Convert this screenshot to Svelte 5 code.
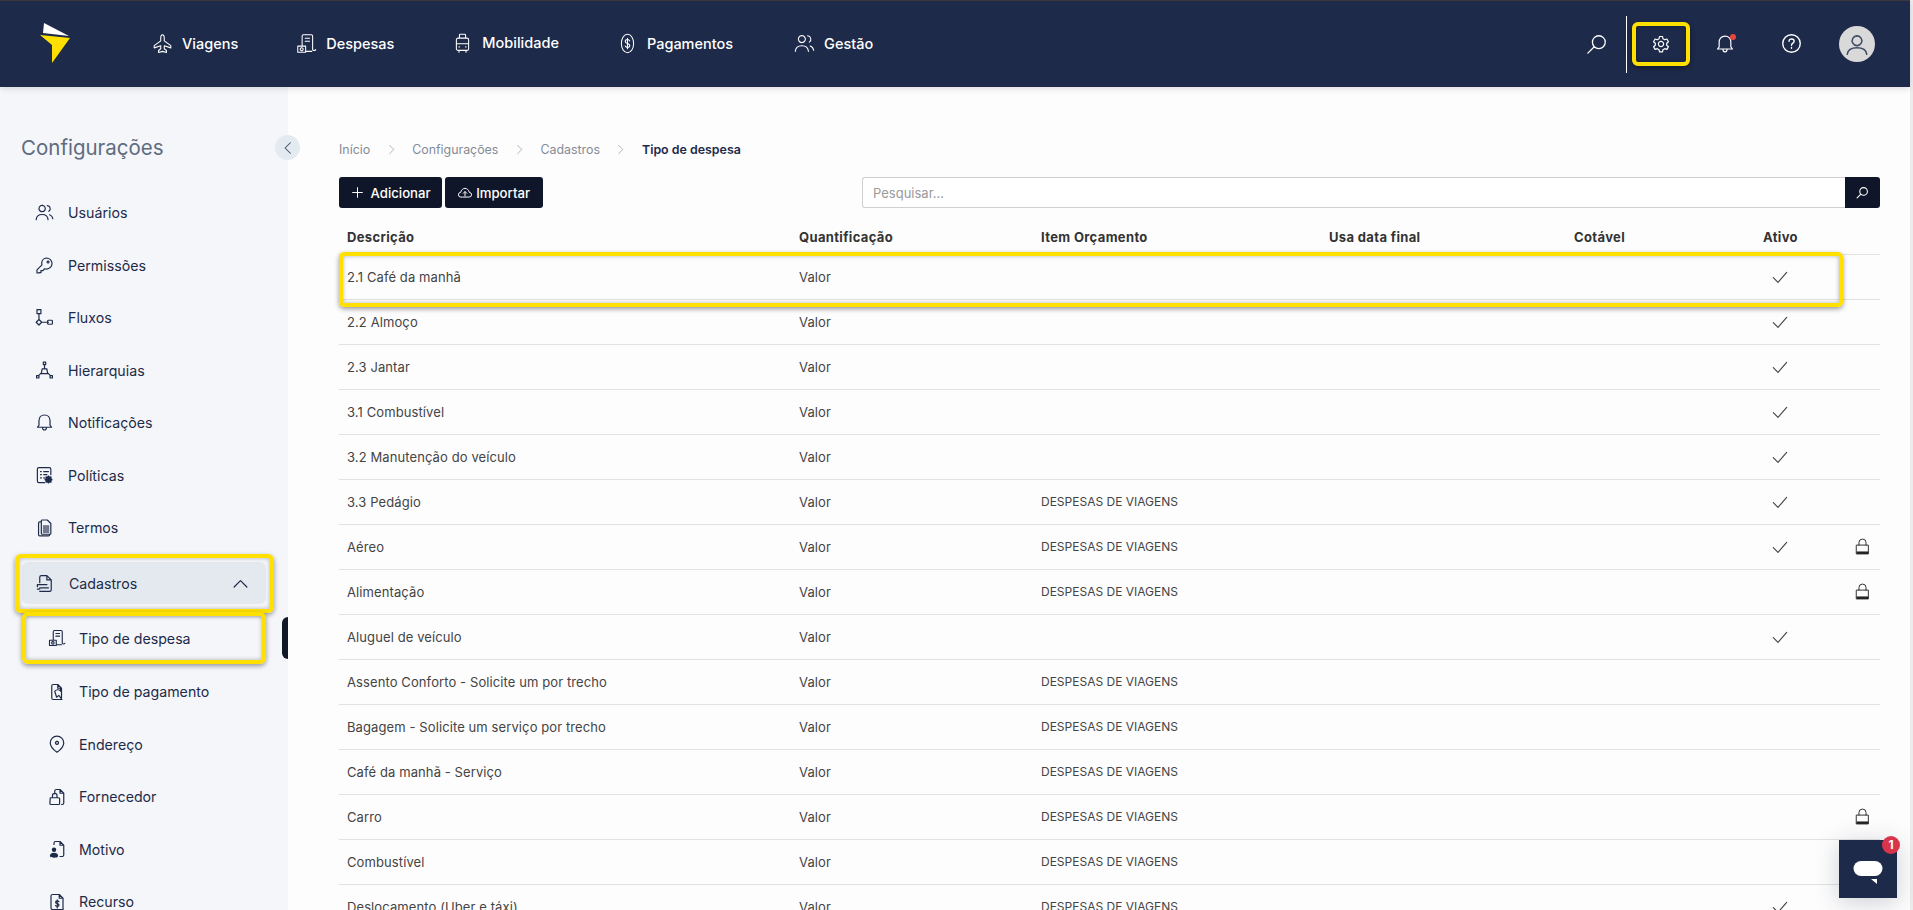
<script>
  const paths = {
    plane: 'M12 2c1.2 0 2 1.6 2 3.5V9l7.5 5.5V17L14 14.6V18l2.5 2v2.2L12 21l-4.500 1.200V20l2.500-2v-3.400L2.500 17v-2.500L10 9V5.500C10 3.600 10.800 2 12 2z',
    receipt: 'M7 14V3.500A1.500 1.500 0 0 1 8.500 2h9A1.500 1.500 0 0 1 19 3.500V19a2 2 0 0 0 3.500 0M10.500 6h5M10.500 9.500h5M2 15h9v7H2zM6.500 16.800a1.700 1.700 0 1 0 .01 0M11 21h7',
    car: 'M5 9a2 2 0 0 1 2-2h10a2 2 0 0 1 2 2v10a2 2 0 0 1-2 2H7a2 2 0 0 1-2-2zM5 13.500h14M8.500 7V3.500a1 1 0 0 1 1-1h5a1 1 0 0 1 1 1V7M8 21v2M16 21v2M8 17h.5M15.500 17h.5',
    dollar: 'M12 1.500c4 0 7 4.700 7 10.500s-3 10.500-7 10.500S5 17.800 5 12s3-10.500 7-10.500zM14.500 9.200c-.5-1.200-1.400-1.700-2.500-1.700-1.500 0-2.600.9-2.600 2.200 0 3 5.200 1.600 5.200 4.600 0 1.300-1.100 2.200-2.600 2.200-1.100 0-2-.5-2.500-1.700M12 6v12',
    users: 'M9 3a4 4 0 1 0 .01 0M1.500 21c.3-4 3.400-6.500 7.500-6.500s7.200 2.500 7.500 6.500M15.500 3.200a4 4 0 0 1 2 7.300M18.500 14.800c2.200.8 3.700 2.800 4 5',
    key: 'M14.500 2.500a7 7 0 0 1 0 14c-.9 0-1.600-.1-2.400-.4L10 18.500H7.500V21H5v.5H2.500V17.500l6.300-6.300c-.2-.7-.3-1.300-.3-2.200a6.500 6.500 0 0 1 6-6.500zM16.500 6.500a1.200 1.200 0 1 0 .01 0',
    flow: 'M2.500 2h5v5h-5zM5 7v8M5 14.500 8.500 18 5 21.500 1.500 18zM8.500 18H17M17 15.500h4a1 1 0 0 1 1 1v3a1 1 0 0 1-1 1h-4a1 1 0 0 1-1-1v-3a1 1 0 0 1 1-1z',
    tree: 'M10.500 1.500h3v3h-3zM12 4.500V10M9 10h6l1 6H8zM8 15l-3.500 3.500M16 15l3.500 3.500M2 18.500h3v3H2zM19 18.500h3v3h-3z',
    bell: 'M12 2.500c4.500 0 7 3.400 7 7.500v5.500l2 2.500H3l2-2.500V10c0-4.100 2.500-7.500 7-7.500zM9.500 18c0 2 1 3.500 2.500 3.500s2.500-1.500 2.500-3.500',
    policy: 'M20 11V4a2 2 0 0 0-2-2H5a2 2 0 0 0-2 2v15a2 2 0 0 0 2 2h7M7 7h1M11 7h6M7 11h1M11 11h4M7 15h1M11 15h1',
    terms: 'M9 2.500h6.500L20 7v12.500a1 1 0 0 1-1 1H9a1 1 0 0 1-1-1v-16a1 1 0 0 1 1-1zM8 5H6a1.500 1.500 0 0 0-1.500 1.500V21A1.500 1.500 0 0 0 6 22.500h11a1.500 1.500 0 0 0 1.500-1.500v-.5',
    cadastro: 'M6 11V4a2 2 0 0 1 2-2h7l5.500 5.500V20a2 2 0 0 1-2 2H6M15 2v5.500h5.500M3 13.500h12M3 13.500v2.500M6 17.500h11M3 19h3',
    payment: 'M18 20V7l-5-5H7a2 2 0 0 0-2 2v16a2 2 0 0 0 2 2h10a2 2 0 0 0 1-.300M13 2v5h5M9 11a5 5 0 0 1 8 0M17 11l-.5-3M9 11l2.500 8 3-2.500 4 5.500',
    pin: 'M12 1.500a9 9 0 0 1 9 9c0 5-5 9.500-9 12.500-4-3-9-7.500-9-12.500a9 9 0 0 1 9-9zM12 8.500a2 2 0 1 0 .01 0',
    supplier: 'M9 8V4a2 2 0 0 1 2-2h5l5 5v13a2 2 0 0 1-2 2h-1M16 2v5h5M3 13h11a1.500 1.500 0 0 1 1.500 1.500v6A1.500 1.500 0 0 1 14 22H4a1.500 1.500 0 0 1-1.500-1.500zM6 13v-3a3 3 0 0 1 6 0v3',
    motive: 'M8 6V4a2 2 0 0 1 2-2h6l5 5v13a2 2 0 0 1-2 2h-3M16 2v5h5',
    resource: 'M20 22H6a2 2 0 0 1-2-2V4a2 2 0 0 1 2-2h9l5 5v13a2 2 0 0 1 0 2zM15 2v5h5M14.500 11.500c-.5-.8-1.300-1-2.200-1-1.300 0-2.200.7-2.200 1.800 0 2.400 4.600 1.300 4.600 3.700 0 1.100-1 1.800-2.300 1.800-1 0-1.800-.4-2.300-1.200M12.300 9v11',
    search: 'M14 3a7 7 0 1 1 0 14 7 7 0 0 1 0-14zM9 15l-7 7',
    gear: 'M10 2h4l.6 3 2.400 1.400 2.900-1 2 3.500-2.300 2 0 2.800 2.300 2-2 3.500-2.900-1-2.400 1.400-.6 3h-4l-.6-3L7 18.200l-2.900 1-2-3.500 2.300-2v-2.800l-2.300-2 2-3.500 2.900 1L9.400 5zM12 8.500a3.500 3.500 0 1 0 .01 0',
    help: 'M12 2a10 10 0 1 1 0 20 10 10 0 0 1 0-20zM9.200 9.500c0-1.600 1.200-2.700 2.900-2.700s2.900 1 2.900 2.500c0 2.300-3 2.300-3 4.700M12 16.600v.9',
    user: 'M12 4.500a4.500 4.500 0 1 0 .01 0M3 21.500c.5-4 4-6 9-6s8.500 2 9 6',
    chevronLeft: 'M16 3 7 12l9 9',
    chevronUp: 'M3 17 12 8l9 9',
    chevronRight: 'M8 3l9 9-9 9',
    plus: 'M12 3v18M3 12h18',
    cloud: 'M7 19H5a4 4 0 0 1-.5-8C5.500 7 8.500 4 12 4s6.500 3 7.500 7a4 4 0 0 1-.5 8zM12 17v-7M9 12.500l3-3 3 3',
    check: 'M2 13l7 7L22 5',
    lock: 'M3.750 10h16.500v12.500H3.750zM7 10V6.500a5 5 0 0 1 10 0V10'
  };

  const fills = {
    policy: 'M18 13l1.200.4.900-.6 1.200 1.200-.6.9.4 1.100 1 .3v1.600l-1 .3-.4 1.100.6.9-1.200 1.200-.9-.6-1.200.4-.3 1h-1.400l-.3-1-1.100-.4-.9.6-1.200-1.200.6-.9-.4-1.100-1-.3v-1.600l1-.3.4-1.100-.6-.9 1.200-1.200.9.6 1.100-.4.3-1h1.400z',
    motive: 'M8 10a3 3 0 1 1 0 6 3 3 0 0 1 0-6zM2.500 21c0-2.500 2.500-4 5.500-4s5.500 1.500 5.500 4-2.500 2.500-5.500 2.500-5.500 0-5.500-2.500z',
    terms: 'M10 9h8v10h-8z',
    lock: 'M3.750 19h16.500v3.500H3.750z'
  };

  const nav = [
    { icon: 'plane', label: 'Viagens', left: 0 },
    { icon: 'receipt', label: 'Despesas', left: 58 },
    { icon: 'car', label: 'Mobilidade', left: 58, up: true },
    { icon: 'dollar', label: 'Pagamentos', left: 58 },
    { icon: 'users', label: 'Gestão', left: 61 }
  ];

  const menu = ['Usuários:users', 'Permissões:key', 'Fluxos:flow', 'Hierarquias:tree', 'Notificações:bell', 'Políticas:policy', 'Termos:terms']
    .map((s) => s.split(':'));
  const submenu = ['Tipo de pagamento:payment', 'Endereço:pin', 'Fornecedor:supplier', 'Motivo:motive', 'Recurso:resource']
    .map((s) => s.split(':'));

  const D = 'DESPESAS DE VIAGENS';
  const rows = [
    ['2.1 Café da manhã', '', true, false],
    ['2.2 Almoço', '', true, false],
    ['2.3 Jantar', '', true, false],
    ['3.1 Combustível', '', true, false],
    ['3.2 Manutenção do veículo', '', true, false],
    ['3.3 Pedágio', D, true, false],
    ['Aéreo', D, true, true],
    ['Alimentação', D, false, true],
    ['Aluguel de veículo', '', true, false],
    ['Assento Conforto - Solicite um por trecho', D, false, false],
    ['Bagagem - Solicite um serviço por trecho', D, false, false],
    ['Café da manhã - Serviço', D, false, false],
    ['Carro', D, false, true],
    ['Combustível', D, false, false],
    ['Deslocamento (Uber e táxi)', D, true, false]
  ];
</script>

{#snippet icon(name, size = 20, sw = 1.5)}
  <svg width={size} height={size} viewBox="0 0 24 24" fill="none" stroke="currentColor" stroke-width={sw} stroke-linecap="round" stroke-linejoin="round">
    {#if paths[name]}<path d={paths[name]} />{/if}
    {#if fills[name]}<path d={fills[name]} fill="currentColor" stroke="none" opacity={name === 'terms' ? 0.6 : 1} />{/if}
  </svg>
{/snippet}

<div class="page">
  <div class="content">
    <header>
      <svg class="logo" width="30" height="40" viewBox="0 0 30 40">
        <path d="M4 0 29 13 3 10z" fill="#fff" />
        <path d="M0 12 30 15 12 40 12 22z" fill="#ffe000" />
      </svg>
      <nav>
        {#each nav as n}
          <a class="nav-link" class:up={n.up} style="margin-left: {n.left}px">
            {@render icon(n.icon, 21, 1.2)}
            <span>{n.label}</span>
          </a>
        {/each}
      </nav>
      <div class="tools">
        <span class="tool search">{@render icon('search', 22, 1.4)}</span>
        <span class="divider"></span>
        <span class="tool gear">
          {@render icon('gear', 18, 1.6)}
          <span class="mark"></span>
        </span>
        <span class="tool bell">
          {@render icon('bell', 20, 1.4)}
          <i class="dot"></i>
        </span>
        <span class="tool help">{@render icon('help', 21, 1.6)}</span>
        <span class="avatar">{@render icon('user', 26, 1.4)}</span>
      </div>
    </header>

    <div class="body">
      <aside>
        <div class="side-title">
          <h2>Configurações</h2>
          <button class="collapse">{@render icon('chevronLeft', 14, 1.8)}</button>
        </div>
        <ul class="menu">
          {#each menu as [label, ic]}
            <li class="item">{@render icon(ic, 19, 1.5)}<span>{label}</span></li>
          {/each}
          <li class="item open">
            <div class="open-bg">
              {@render icon('cadastro', 19, 1.5)}<span>Cadastros</span>
              <span class="chev">{@render icon('chevronUp', 17, 1.7)}</span>
            </div>
            <span class="mark"></span>
          </li>
          <li class="item sub current">
            {@render icon('receipt', 18, 1.5)}<span>Tipo de despesa</span>
            <span class="mark"></span>
            <i class="bar"></i>
          </li>
          {#each submenu as [label, ic]}
            <li class="item sub">{@render icon(ic, 18, 1.6)}<span>{label}</span></li>
          {/each}
        </ul>
      </aside>

      <main>
        <div class="crumbs">
          <span>Início</span>{@render icon('chevronRight', 11, 1.4)}
          <span>Configurações</span>{@render icon('chevronRight', 11, 1.4)}
          <span>Cadastros</span>{@render icon('chevronRight', 11, 1.4)}
          <b>Tipo de despesa</b>
        </div>
        <div class="toolbar">
          <button class="btn">{@render icon('plus', 13, 1.8)}<span>Adicionar</span></button>
          <button class="btn import">{@render icon('cloud', 14, 1.7)}<span>Importar</span></button>
          <div class="searchbox">
            <input placeholder="Pesquisar..." />
            <button class="go">{@render icon('search', 13, 2)}</button>
          </div>
        </div>
        <div class="table">
          <div class="row head">
            <div>Descrição</div>
            <div>Quantificação</div>
            <div>Item Orçamento</div>
            <div>Usa data final</div>
            <div>Cotável</div>
            <div>Ativo</div>
            <div></div>
          </div>
          {#each rows as [desc, item, active, locked], i}
            <div class="row">
              <div>{desc}</div>
              <div>Valor</div>
              <div class="budget">{item}</div>
              <div></div>
              <div></div>
              <div class="ok">{#if active}{@render icon('check', 16, 1.7)}{/if}</div>
              <div class="locked">{#if locked}{@render icon('lock', 17, 1.3)}{/if}</div>
              {#if i === 0}<span class="mark"></span>{/if}
            </div>
          {/each}
        </div>
      </main>
    </div>
  </div>
  <div class="scrollbar"></div>

  <div class="chat">
    <svg width="30" height="24" viewBox="0 0 30 24">
      <rect x="0.500" y="0" width="29" height="15" rx="7.500" fill="#fff" />
      <path d="M18 18h6v5z" fill="#fff" />
    </svg>
    <i class="badge">1</i>
  </div>
</div>

<style>
  :global(body) {
    margin: 0;
    overflow: hidden;
    background: #fdfdfd;
  }
  .page {
    position: relative;
    display: flex;
    width: 1913px;
    height: 910px;
    overflow: hidden;
    font-family: Inter, "Open Sans", sans-serif;
    font-size: 13.5px;
    color: #1e2a4a;
  }
  .content {
    flex: 1;
    min-width: 0;
  }
  .scrollbar {
    width: 3px;
    background: #ececec;
  }
  header {
    display: flex;
    align-items: center;
    height: 86px;
    border-top: 1px solid #3a3a3a;
    background: #1e2a4a;
    color: #fff;
    padding-left: 40px;
    position: relative;
    z-index: 2;
    box-shadow: 0 2px 6px rgba(0, 0, 0, 0.12);
  }
  .logo {
    margin-top: -2px;
    flex: none;
  }
  nav {
    display: flex;
    align-items: center;
    margin: -2px 0 0 82px;
  }
  .nav-link {
    display: flex;
    align-items: center;
    gap: 9px;
    font-size: 14.500px;
    font-weight: 500;
  }
  .nav-link.up {
    margin-top: -2px;
  }
  .tools {
    margin: -1px 0 0 auto;
    display: flex;
    align-items: center;
    padding-right: 35px;
  }
  .tool {
    position: relative;
    display: flex;
    align-items: center;
    justify-content: center;
    height: 44px;
  }
  .search {
    width: 22px;
  }
  .divider {
    width: 1px;
    height: 57px;
    background: #fff;
    margin: 1px 12px 0 18px;
  }
  .gear {
    width: 44px;
  }
  .gear .mark {
    inset: 0 -7px;
  }
  .bell {
    width: 22px;
    margin-left: 31px;
  }
  .dot {
    position: absolute;
    top: 12px;
    right: 0;
    width: 6px;
    height: 6px;
    border-radius: 50%;
    background: #e8453c;
  }
  .help {
    width: 22px;
    margin-left: 44px;
  }
  .avatar {
    display: flex;
    align-items: center;
    justify-content: center;
    width: 36px;
    height: 36px;
    margin-left: 37px;
    border-radius: 50%;
    background: #d9d9d9;
    color: #3f4a63;
  }
  .mark {
    position: absolute;
    border: 4px solid #ffe000;
    border-radius: 6px;
    box-shadow: 0 2px 5px rgba(0, 0, 0, 0.4), inset 0 0 4px rgba(0, 0, 0, 0.3);
    pointer-events: none;
    box-sizing: border-box;
  }
  .body {
    display: flex;
    height: 823px;
  }
  aside {
    width: 288px;
    flex: none;
    background: #f4f6f9;
    position: relative;
  }
  .side-title {
    display: flex;
    align-items: center;
    justify-content: space-between;
    padding: 48px 0 0 21px;
    height: 25px;
  }
  h2 {
    margin: 0;
    font-size: 20.500px;
    font-weight: 400;
    color: #5f6b80;
  }
  .collapse {
    display: flex;
    align-items: center;
    justify-content: center;
    width: 25px;
    height: 25px;
    padding: 0;
    border: 0;
    border-radius: 50%;
    background: #e3eaf0;
    color: #3f4a63;
    margin-right: -12px;
    position: relative;
    z-index: 1;
  }
  .menu {
    list-style: none;
    margin: 26.500px 0 0;
    padding: 0;
  }
  .item {
    position: relative;
    display: flex;
    align-items: center;
    gap: 14px;
    height: 52.500px;
    padding-left: 35px;
  }
  .item span:not(.mark):not(.chev) {
    font-size: 14.200px;
  }
  .open {
    padding-left: 0;
    margin-top: 1.500px;
    height: 55px;
  }
  .open-bg {
    display: flex;
    align-items: center;
    gap: 15px;
    width: 244px;
    height: 42px;
    margin-left: 22px;
    padding-left: 13px;
    box-sizing: border-box;
    border-radius: 6px;
    background: #e3e9ef;
  }
  .chev {
    margin-left: auto;
    margin-right: 17px;
    display: flex;
  }
  .open .mark {
    left: 15px;
    width: 259px;
    top: -2px;
    height: 59px;
  }
  .sub {
    padding-left: 48px;
    gap: 13px;
  }
  .current {
    height: 55px;
  }
  .current .mark {
    left: 22px;
    width: 244px;
    top: 1px;
    height: 52px;
  }
  .bar {
    position: absolute;
    right: 0;
    top: 6px;
    width: 6px;
    height: 42px;
    border-radius: 6px 0 0 6px;
    background: #111827;
  }
  main {
    flex: 1;
    min-width: 0;
    padding: 0 30px 0 51px;
    color: #444;
  }
  .crumbs {
    display: flex;
    align-items: center;
    height: 20px;
    margin-top: 52px;
    font-size: 12.400px;
    color: #858b96;
  }
  .crumbs svg {
    margin: 0 15.500px;
  }
  .crumbs b {
    font-weight: 600;
    color: #1e2a4a;
  }
  .toolbar {
    display: flex;
    align-items: stretch;
    height: 31px;
    margin-top: 18px;
  }
  .btn {
    display: flex;
    align-items: center;
    gap: 7px;
    padding: 0 11.500px;
    border: 0;
    border-radius: 3px;
    background: #10162a;
    color: #fff;
    font: 500 13.200px Inter, sans-serif;
  }
  .import {
    margin-left: 3px;
    gap: 4px;
    padding: 0 13px;
  }
  .searchbox {
    display: flex;
    margin-left: auto;
    width: 1018px;
  }
  input {
    flex: 1;
    min-width: 0;
    box-sizing: border-box;
    padding: 0 10px;
    border: 1px solid #cfcfcf;
    border-right: 0;
    border-radius: 3px 0 0 3px;
    background: #fff;
    font: 13px Inter, sans-serif;
  }
  input::placeholder {
    color: #9a9a9a;
  }
  .go {
    display: flex;
    align-items: center;
    justify-content: center;
    width: 35px;
    padding: 0;
    border: 0;
    border-radius: 0 3px 3px 0;
    background: #10162a;
    color: #fff;
  }
  .table {
    margin-top: 12px;
    font-size: 13px;
    letter-spacing: 0.1px;
  }
  .row {
    position: relative;
    display: grid;
    grid-template-columns: 452px 242px 288px 245px 189px 85px 1fr;
    align-items: center;
    height: 45px;
    border-bottom: 1px solid #e2e2e2;
    box-sizing: border-box;
  }
  .row > div {
    padding-left: 8px;
    white-space: nowrap;
  }
  .row > .budget {
    font-size: 12px;
    letter-spacing: 0;
  }
  .row.head {
    height: 34.500px;
    font-weight: 700;
    color: #333;
    letter-spacing: 0.35px;
  }
  .ok {
    display: flex;
    padding-left: 17px !important;
  }
  .locked {
    display: flex;
    padding-left: 14px !important;
    color: #222;
  }
  .row .mark {
    left: 0;
    top: -3px;
    width: 1504px;
    height: 55px;
    border-radius: 5px;
  }
  .chat {
    position: absolute;
    left: 1839px;
    top: 840px;
    width: 58px;
    height: 58px;
    display: flex;
    align-items: center;
    justify-content: center;
    background: #1e2a4a;
    box-shadow: 0 4px 24px rgba(30, 42, 74, 0.22);
  }
  .chat svg {
    margin-top: 8px;
  }
  .badge {
    position: absolute;
    top: -4px;
    right: -3px;
    width: 18px;
    height: 18px;
    border-radius: 50%;
    background: #d9354a;
    color: #fff;
    font: 700 12px/18px Inter, sans-serif;
    text-align: center;
  }
</style>
